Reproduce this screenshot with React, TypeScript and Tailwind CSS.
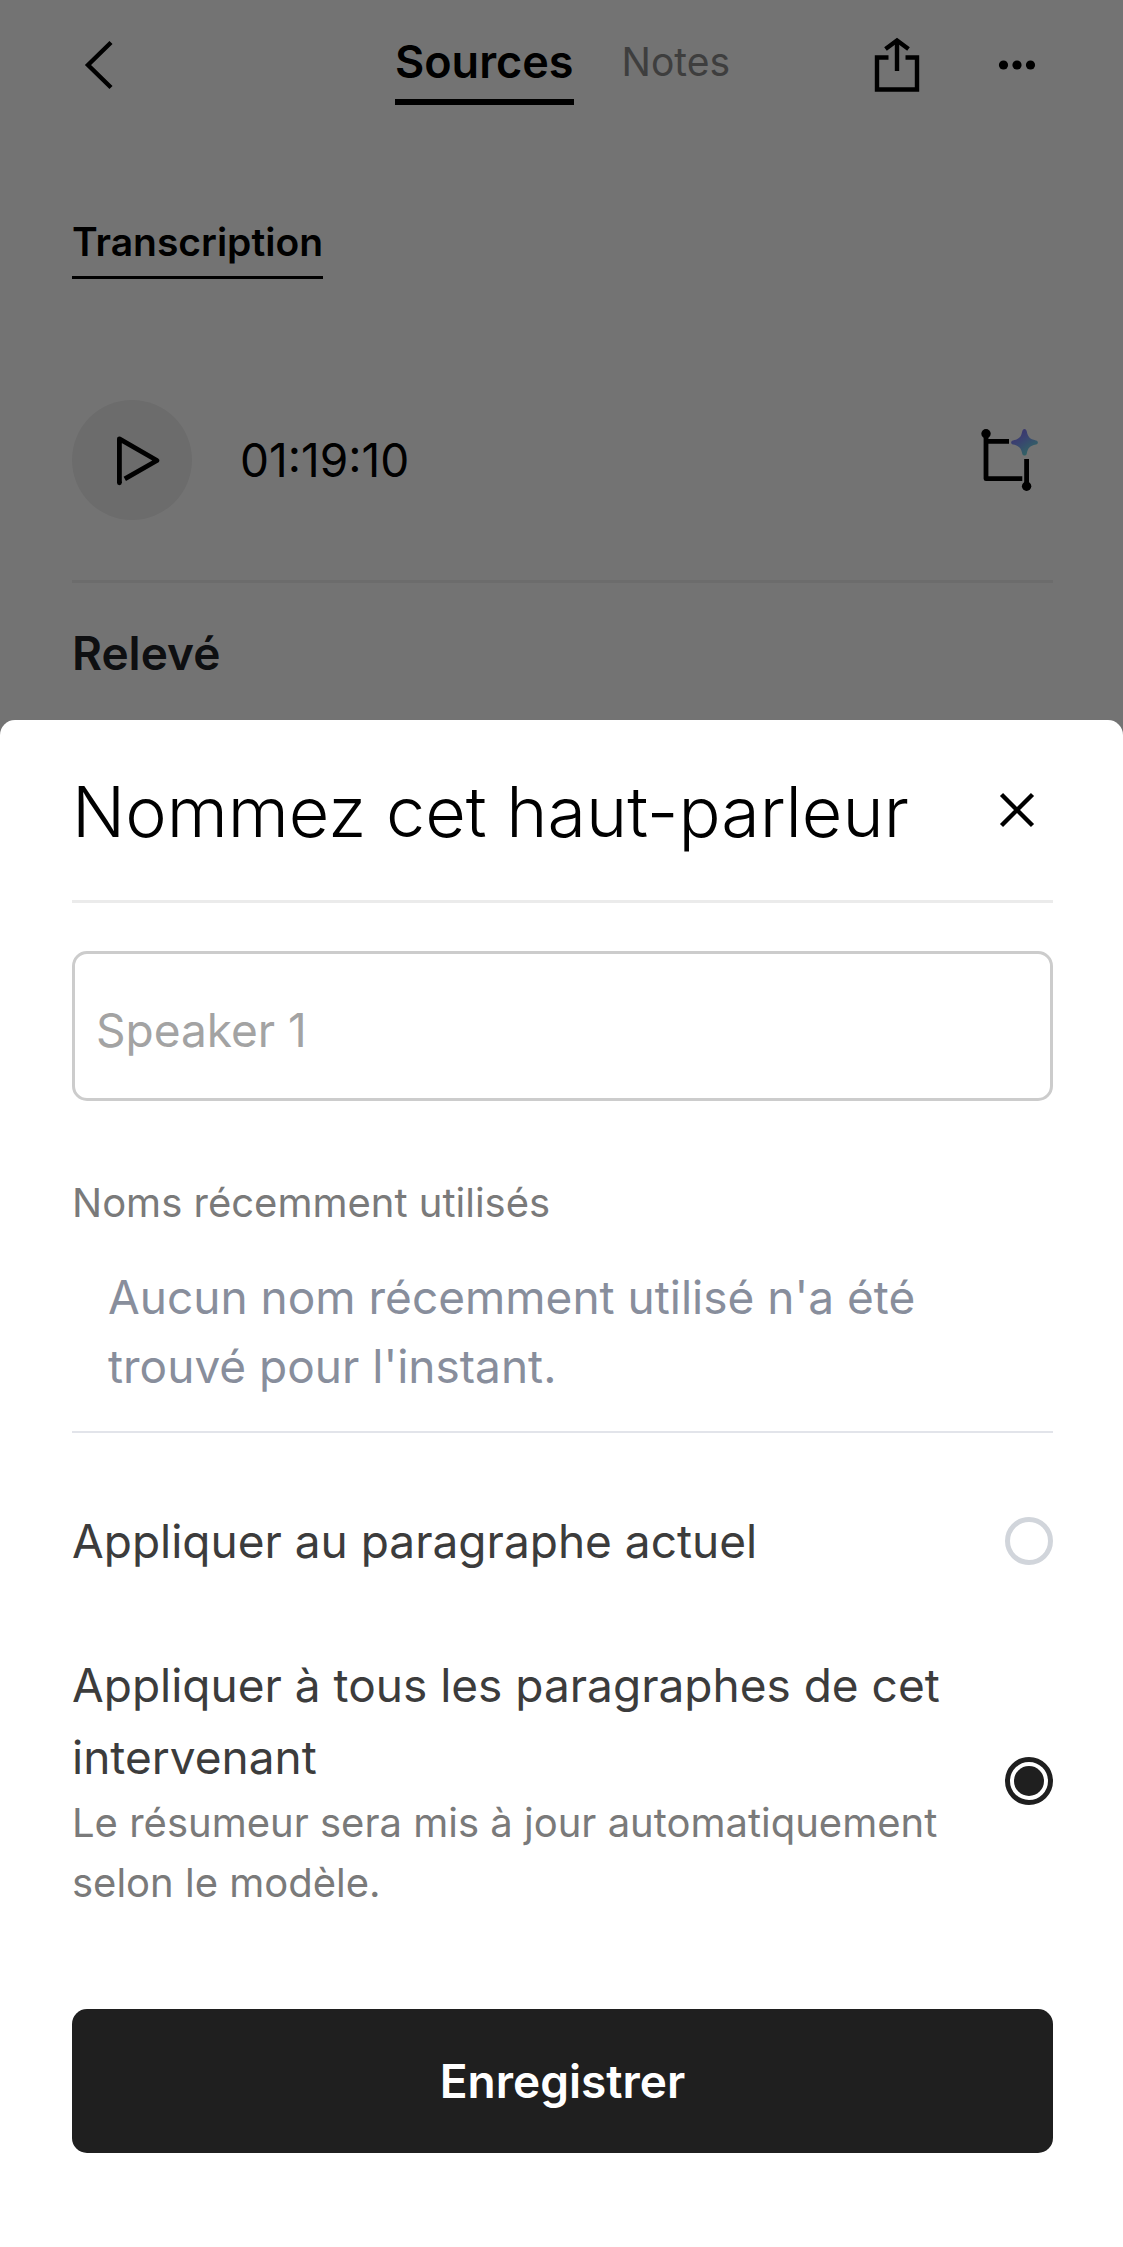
import { FC, ReactNode, useState } from "react";

type Scope = "current" | "all";

interface ScopeOptionProps {
  value: Scope;
  selected: Scope;
  onSelect: (value: Scope) => void;
  title: string;
  hint?: string;
}

interface IconProps {
  children: ReactNode;
  strokeWidth?: number;
}

const Icon: FC<IconProps> = ({ children, strokeWidth = 4.4 }) => (
  <svg
    viewBox="0 0 72 72"
    className="size-[72px]"
    fill="none"
    stroke="currentColor"
    strokeWidth={strokeWidth}
    aria-hidden="true"
  >
    {children}
  </svg>
);

const BackIcon = () => (
  <Icon>
    <path d="M39 13.500 16 36 39 58.500" />
  </Icon>
);

const ShareIcon = () => (
  <Icon>
    <path d="M27.5 28.5H16V60.5H56V28.5H44.5" />
    <path d="M36 42V11.5" />
    <path d="M24.500 20 36 11.500 47.500 20" />
  </Icon>
);

const MoreIcon = () => (
  <Icon>
    <g fill="currentColor" stroke="none">
      <circle cx="22.5" cy="36" r="4.6" />
      <circle cx="36" cy="36" r="4.6" />
      <circle cx="49.5" cy="36" r="4.6" />
    </g>
  </Icon>
);

const PlayIcon = () => (
  <Icon strokeWidth={4.8}>
    <path d="M23.400 59V14.800L61 36.500 28.800 54.800" strokeLinejoin="round" />
    <circle cx="23.4" cy="58.8" r="2.4" fill="currentColor" stroke="none" />
  </Icon>
);

const CloseIcon = () => (
  <Icon>
    <path d="M20.5 20.5 51.5 51.5M51.5 20.5 20.5 51.5" />
  </Icon>
);

const SmartCropIcon = () => (
  <Icon strokeWidth={4.8}>
    <defs>
      <linearGradient id="spark" x1="0" y1="0" x2="0.7" y2="1">
        <stop offset="0.1" stopColor="#8470f0" />
        <stop offset="0.45" stopColor="#8092fa" />
        <stop offset="1" stopColor="#6ce8dc" />
      </linearGradient>
    </defs>
    <path d="M5 9V54.7H41.3M5 17.3H28M45.6 35V60" strokeLinejoin="round" />
    <g fill="currentColor" stroke="none">
      <circle cx="5" cy="9.7" r="4.7" />
      <circle cx="45.6" cy="62.3" r="4.7" />
    </g>
    <path
      d="M43.5 5C44.800 5 45.400 6 45.800 7.500C47 13 48.500 15 55 16.400C57.500 17 57.500 20 55 20.600C48.500 22 47 24 45.800 29.500C45.400 32.300 41.600 32.300 41.200 29.500C40 24 38.500 22 32 20.600C29.500 20 29.500 17 32 16.400C38.500 15 40 13 41.200 7.500C41.600 6 42.200 5 43.500 5Z"
      fill="url(#spark)"
      stroke="none"
    />
  </Icon>
);

const ScopeOption: FC<ScopeOptionProps> = ({
  value,
  selected,
  onSelect,
  title,
  hint,
}) => (
  <label className="flex cursor-pointer items-center justify-between gap-12">
    <span className="flex flex-col">
      <span className="text-[46px] leading-[72px] text-[#3c3c3c]">{title}</span>
      {hint && (
        <span className="text-[40px] leading-[60px] text-[#7a7a7a]">
          {hint}
        </span>
      )}
    </span>
    <input
      type="radio"
      name="scope"
      value={value}
      checked={selected === value}
      onChange={() => onSelect(value)}
      className="grid size-12 shrink-0 cursor-pointer appearance-none place-content-center rounded-full border-[5px] border-[#d1d5db] checked:border-[#1f1f1f] checked:before:size-[30px] checked:before:rounded-full checked:before:bg-[#1f1f1f]"
    />
  </label>
);

const App = () => {
  const [name, setName] = useState("");
  const [scope, setScope] = useState<Scope>("all");

  return (
    <div className="relative min-h-screen bg-white font-['Inter','Liberation_Sans',sans-serif] text-black">
      <header className="grid grid-cols-[1fr_auto_1fr] items-start pt-[29px] pr-[70px] pl-[72px]">
        <button type="button" aria-label="Retour" className="justify-self-start">
          <BackIcon />
        </button>
        <nav className="flex items-start gap-12 pt-1">
          <a
            href="#sources"
            className="border-b-[6px] border-black pb-2 text-[45px] leading-[58px] font-semibold"
          >
            Sources
          </a>
          <a
            href="#notes"
            className="text-[39px] leading-[58px] text-[#8a8a8a]"
          >
            Notes
          </a>
        </nav>
        <div className="flex justify-end gap-12">
          <button type="button" aria-label="Partager">
            <ShareIcon />
          </button>
          <button type="button" aria-label="Plus d'options">
            <MoreIcon />
          </button>
        </div>
      </header>

      <main className="pt-[107px] pr-[70px] pl-[72px]">
        <h2 className="w-fit border-b-[3px] border-black pb-1 text-[39px] leading-[60px] font-semibold">
          Transcription
        </h2>
        <div className="mt-[121px] flex items-center border-b-[3px] border-[#efefef] pb-[60px]">
          <button
            type="button"
            aria-label="Lecture"
            className="flex size-[120px] items-center justify-center rounded-full bg-[#efefef]"
          >
            <PlayIcon />
          </button>
          <span className="ml-12 text-[46px] leading-[72px]">01:19:10</span>
          <button type="button" aria-label="Sélection" className="ml-auto">
            <SmartCropIcon />
          </button>
        </div>
        <h3 className="mt-[34px] text-[46px] leading-[72px] font-semibold text-[#202226]">
          Relevé
        </h3>
      </main>

      <div className="absolute inset-0 flex items-end bg-black/55">
        <section
          role="dialog"
          aria-labelledby="sheet-title"
          className="w-full rounded-t-[15px] bg-white pr-[70px] pb-[94px] pl-[72px]"
        >
          <div className="flex h-[183px] items-center justify-between border-b-[3px] border-[#ebebeb]">
            <h1
              id="sheet-title"
              className="pt-1 text-[70px] leading-[96px] font-light"
            >
              Nommez cet haut-parleur
            </h1>
            <button type="button" aria-label="Fermer">
              <CloseIcon />
            </button>
          </div>

          <input
            type="text"
            aria-label="Nom du haut-parleur"
            placeholder="Speaker 1"
            value={name}
            onChange={(e) => setName(e.target.value)}
            className="mt-12 block h-[150px] w-full rounded-[15px] border-[3px] border-[#cccccc] px-[21px] pt-2 text-[46px] outline-none placeholder:text-[#a3a3a3]"
          />

          <div className="border-b-2 border-[#e2e4ea] pt-[72px] pb-[30px]">
            <h2 className="text-[40px] leading-[60px] text-[#7a7a7a]">
              Noms récemment utilisés
            </h2>
            <p className="mt-[30px] px-9 text-[46px] leading-[69px] text-[#888e9c]">
              Aucun nom récemment utilisé n'a été trouvé pour l'instant.
            </p>
          </div>

          <div className="flex flex-col gap-[72px] pt-[72px]">
            <ScopeOption
              value="current"
              selected={scope}
              onSelect={setScope}
              title="Appliquer au paragraphe actuel"
            />
            <ScopeOption
              value="all"
              selected={scope}
              onSelect={setScope}
              title="Appliquer à tous les paragraphes de cet intervenant"
              hint="Le résumeur sera mis à jour automatiquement selon le modèle."
            />
          </div>

          <button
            type="button"
            className="mt-24 h-36 w-full rounded-[15px] bg-[#1f1f1f] text-[46px] font-semibold text-white"
          >
            Enregistrer
          </button>
        </section>
      </div>
    </div>
  );
};

export default App;
